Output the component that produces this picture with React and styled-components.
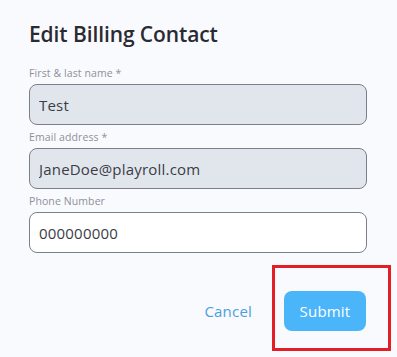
import React from 'react';
import styled, { createGlobalStyle } from 'styled-components';

const GlobalStyle = createGlobalStyle`
  html, body {
    margin: 0;
    padding: 0;
    background: #f9fafe;
    font-family: "Open Sans", "Liberation Sans", sans-serif;
  }
`;

const Dialog = styled.div`
  width: 397px;
  height: 357px;
  box-sizing: border-box;
  padding: 19px 30px 0 29px;
  background: #f9fafe;
  display: flex;
  flex-direction: column;
`;

const Title = styled.h2`
  margin: 0 0 17px;
  font-size: 21px;
  line-height: 30px;
  font-weight: 600;
  color: #2a2b32;
  letter-spacing: -0.1px;
`;

const Field = styled.div`
  display: flex;
  flex-direction: column;
  margin-bottom: 5px;
`;

const Label = styled.label`
  font-size: 10.5px;
  line-height: 15px;
  color: #8d909a;
  margin-bottom: 3px;
  letter-spacing: 0.1px;
`;

const Input = styled.input`
  box-sizing: border-box;
  height: 41px;
  width: 100%;
  padding: 0 9px;
  border: 1px solid #7b7f8c;
  border-radius: 8px;
  background: ${(props) => (props.readOnly ? '#e1e6ed' : '#ffffff')};
  color: #3a3d45;
  font-family: inherit;
  font-size: 15px;
  letter-spacing: 0.2px;
  outline: none;
`;

const Actions = styled.div`
  display: flex;
  justify-content: flex-end;
  align-items: center;
  gap: 32px;
  margin-top: 33px;
  padding-right: 1px;
`;

const CancelButton = styled.button`
  border: none;
  background: none;
  padding: 0;
  color: #4a9fe0;
  font-family: inherit;
  font-size: 15px;
  letter-spacing: 0.2px;
  cursor: pointer;
`;

const Highlight = styled.div`
  position: relative;
  display: flex;
`;

const SubmitButton = styled.button`
  width: 82px;
  height: 40px;
  border: none;
  border-radius: 8px;
  background: #4bb5fa;
  color: #ffffff;
  font-family: inherit;
  font-size: 15px;
  font-weight: 500;
  letter-spacing: 0.2px;
  cursor: pointer;
`;

const RedBox = styled.div`
  position: absolute;
  left: -12px;
  top: -26px;
  width: 119px;
  height: 86px;
  box-sizing: border-box;
  border: 3px solid #e31e24;
  pointer-events: none;
`;

function App() {
  return (
    <>
      <GlobalStyle />
      <Dialog>
        <Title>Edit Billing Contact</Title>
        <Field>
          <Label>First &amp; last name *</Label>
          <Input readOnly value="Test" />
        </Field>
        <Field>
          <Label>Email address *</Label>
          <Input readOnly value="JaneDoe@playroll.com" />
        </Field>
        <Field>
          <Label>Phone Number</Label>
          <Input defaultValue="000000000" />
        </Field>
        <Actions>
          <CancelButton>Cancel</CancelButton>
          <Highlight>
            <SubmitButton>Submit</SubmitButton>
            <RedBox />
          </Highlight>
        </Actions>
      </Dialog>
    </>
  );
}

export default App;
